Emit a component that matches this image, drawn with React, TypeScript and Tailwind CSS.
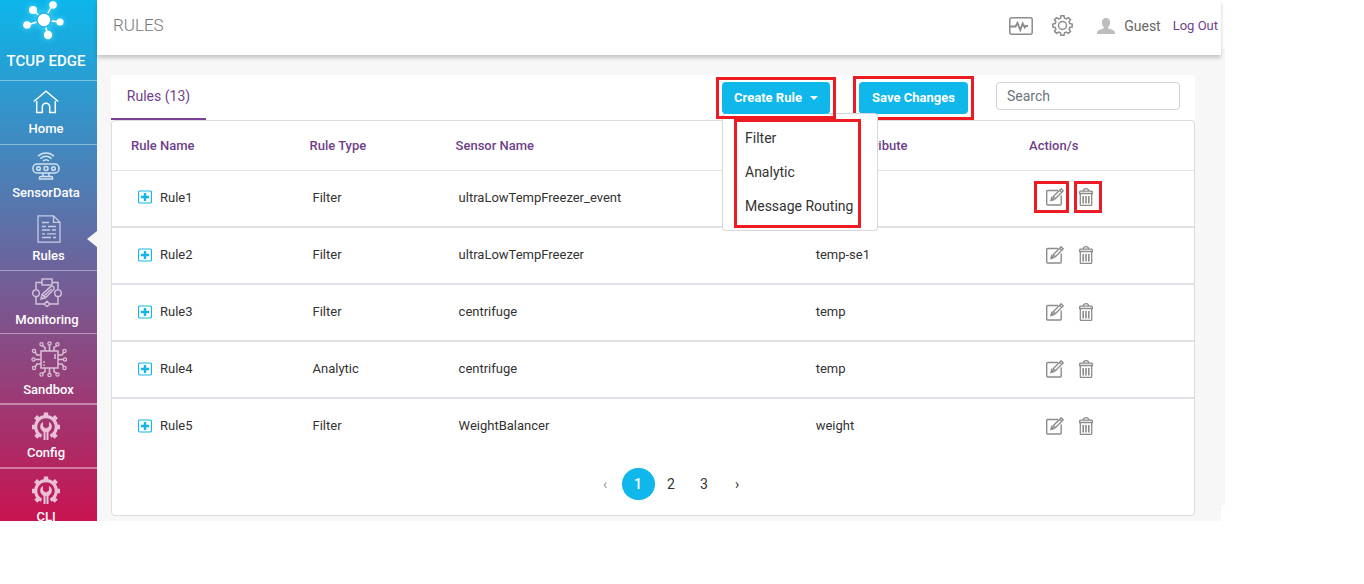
import { clsx } from 'clsx';
import type { ReactNode } from 'react';

interface Rule {
  name: string;
  type: string;
  sensor: string;
  attribute?: string;
}

const rules: Rule[] = [
  { name: 'Rule1', type: 'Filter', sensor: 'ultraLowTempFreezer_event' },
  { name: 'Rule2', type: 'Filter', sensor: 'ultraLowTempFreezer', attribute: 'temp-se1' },
  { name: 'Rule3', type: 'Filter', sensor: 'centrifuge', attribute: 'temp' },
  { name: 'Rule4', type: 'Analytic', sensor: 'centrifuge', attribute: 'temp' },
  { name: 'Rule5', type: 'Filter', sensor: 'WeightBalancer', attribute: 'weight' },
];

function LogoIcon() {
  return (
    <svg
      className="h-[46px] w-14 drop-shadow-[0_0_3px_#4fe3ff]"
      viewBox="0 0 56 46"
      fill="#fff"
      stroke="#fff"
      strokeWidth="1.5"
    >
      <path d="M28 23 17 13M28 23l9-16M28 23l16 2M28 23l4 16M28 23l-17 5" />
      <g stroke="#22b4e4" strokeWidth="1.5">
        <circle cx="28" cy="23" r="7" />
      </g>
      <g stroke="none">
        <circle cx="17" cy="13" r="4" />
        <circle cx="37" cy="8" r="3.8" />
        <circle cx="44" cy="25" r="3.6" />
        <circle cx="32" cy="38" r="4.2" />
        <circle cx="11" cy="28" r="3.8" />
      </g>
    </svg>
  );
}

function HomeIcon() {
  return (
    <svg className="h-6 w-[26px]" viewBox="0 0 26 24" fill="none" stroke="#fff" strokeWidth="1.5">
      <path d="M.8 11.5 13 1.2l12.2 10.3" />
      <path d="M3.7 11v11.5h5.6V17a3.7 3.7 0 0 1 7.4 0v5.5h5.6V11" />
    </svg>
  );
}

function SensorIcon() {
  return (
    <svg className="h-7 w-7" viewBox="0 0 28 28" fill="none" stroke="#d4e2f2" strokeWidth="1.5">
      <path d="M6 4.2C10.500 0 17.500 0 22 4.200M8.500 6.600c3.200-3 7.800-3 11 0M11 9c1.800-1.600 4.200-1.600 6 0" />
      <rect x="1" y="12" width="26" height="9" rx="4" />
      <circle cx="6.500" cy="16.500" r="1.800" />
      <circle cx="14" cy="16.500" r="2" />
      <circle cx="21.500" cy="16.500" r="1.800" />
      <path d="M11 21v3.500M17 21v3.500M7.500 27v-1.200c0-.8.500-1.300 1.300-1.300h10.400c.8 0 1.300.5 1.300 1.300V27z" />
    </svg>
  );
}

function RulesIcon() {
  return (
    <svg className="h-7 w-6" viewBox="0 0 24 28" fill="none" stroke="#c9cbe4" strokeWidth="1.3">
      <path d="M1 .8h15.500L23 7.300v19.900H1z" />
      <path d="M16.500.8v6.500H23" />
      <path d="M5 7.500h7M5 11.500h4M11 11.500h8M5 15h8M15 15h4M5 18.800h3M10 18.800h9M5 22.500h9M16 22.500h3" />
    </svg>
  );
}

function MonitoringIcon() {
  return (
    <svg className="h-[29px] w-[30px]" viewBox="0 0 30 29" fill="none" stroke="#d3c5dc" strokeWidth="1.4">
      <rect x="10" y="1" width="10" height="6" />
      <path d="M10 4.500H4v7M20 4.500h6v7M4 19v7h8M26 19v7h-8" />
      <circle cx="4" cy="15.200" r="3.300" />
      <circle cx="26" cy="15.200" r="3.300" />
      <path d="m15 23.300 2.800 2.700-2.800 2.700-2.800-2.700z" />
      <path d="m9 21 1.200-4.600 8.600-8c1.800-1 4 1 3 3l-8.400 8.400zM10.200 16.400l3.400 3.400M12.500 17.500l7-6.500" />
    </svg>
  );
}

function SandboxIcon() {
  return (
    <svg className="h-9 w-9" viewBox="0 0 36 36" fill="none" stroke="#dcc0d6" strokeWidth="1.5">
      <rect x="10" y="10" width="17" height="17" />
      <path d="M24 13v5M13 23.500V25M13 20v2" />
      <path d="M14 10V6.500l-3-2M18.500 10V4M23 10V6.500l3-2M14 27v3.500l-3 2M18.500 27v6M23 27v3.500l3 2" />
      <path d="M10 14H6l-2-3M10 18.500H4.500M10 23H6l-2 3M27 14h4l2-3M27 18.500h5.500M27 23h4l2 3" />
      <g strokeWidth="1.300">
        <circle cx="10.500" cy="3.200" r="1.600" />
        <circle cx="18.500" cy="2.500" r="1.600" />
        <circle cx="26.500" cy="3.200" r="1.600" />
        <circle cx="10.500" cy="33.500" r="1.600" />
        <circle cx="18.500" cy="34" r="1.600" />
        <circle cx="26.500" cy="33.500" r="1.600" />
        <circle cx="3" cy="10" r="1.600" />
        <circle cx="2.500" cy="18.500" r="1.600" />
        <circle cx="3" cy="27" r="1.600" />
        <circle cx="33.500" cy="10" r="1.600" />
        <circle cx="34" cy="18.500" r="1.600" />
        <circle cx="33.500" cy="27" r="1.600" />
      </g>
    </svg>
  );
}

function ConfigIcon() {
  return (
    <svg className="h-7 w-7" viewBox="0 0 28 28" fill="none" stroke="#e9c0d8">
      <path d="M9.500 24.200A10.300 10.300 0 1 1 18.500 24.200" strokeWidth="3.200" />
      <path
        d="M14 5V.5M6.800 7.800 3.600 4.600M21.200 7.800l3.200-3.200M4.500 15H0M23.500 15H28M6.800 22.200l-3 3M21.200 22.200l3 3"
        strokeWidth="4.400"
      />
      <path
        d="M11 9.800v4.600l3 2 3-2V9.800a5.500 5.500 0 0 1 .2 9.600L16.500 20v8h-5v-8l-.7-.6A5.500 5.500 0 0 1 11 9.800z"
        fill="#e9c0d8"
        stroke="none"
      />
      <path d="M14 20v8" stroke="#a03a78" strokeWidth="1" />
    </svg>
  );
}

function MonitorIcon() {
  return (
    <svg className="h-[18px] w-6" viewBox="0 0 24 18" fill="none" stroke="#8c8c8c" strokeWidth="1.500">
      <rect x=".8" y=".8" width="22.400" height="16.400" rx="2" />
      <path d="M1 9.500h5.500L8.500 6l2.800 7 2.500-6.500 2 4 1.200-1.500h2" strokeWidth="1.900" />
    </svg>
  );
}

function GearIcon() {
  return (
    <svg className="h-[21px] w-[21px]" viewBox="0 0 21 21" fill="none" stroke="#8c8c8c" strokeWidth="1.500">
      <path d="M9 .8h3l.5 2.500 1.700.7 2.200-1.400 2.100 2.100L17.100 6.900l.7 1.600 2.400.5v3l-2.400.5-.7 1.700 1.400 2.100-2.100 2.100-2.200-1.400-1.700.7-.5 2.500H9l-.5-2.500-1.700-.7-2.200 1.400-2.100-2.100 1.400-2.100-.7-1.700-2.400-.5V9l2.400-.5.7-1.600-1.400-2.200 2.100-2.100L6.800 4l1.700-.7z" />
      <circle cx="10.500" cy="10.500" r="4" />
    </svg>
  );
}

function UserIcon() {
  return (
    <svg className="h-4 w-[18px]" viewBox="0 0 18 16" fill="#bdbdbd">
      <path d="M9 0c2.600 0 4.100 1.800 4.100 4.400 0 2-.8 3.700-1.900 4.600v1.200c0 .6 6.800 1.300 6.800 4.600V16H0v-1.200c0-3.300 6.800-4 6.800-4.600V9c-1.100-.9-1.900-2.600-1.900-4.600C4.900 1.800 6.400 0 9 0z" />
    </svg>
  );
}

function ExpandIcon() {
  return (
    <svg className="h-3.5 w-3.5" viewBox="0 0 14 14" fill="none" stroke="#14b5e8">
      <rect x=".5" y="1" width="13" height="12" rx="1.500" strokeWidth="1.200" />
      <path d="M3 7h8M7 3v8" strokeWidth="2.400" />
    </svg>
  );
}

function EditIcon() {
  return (
    <svg className="h-[18px] w-[18px]" viewBox="0 0 18 18" fill="none" stroke="#8c8c8c" strokeWidth="1.400">
      <path d="M12 2.500H1.600c-.5 0-.9.4-.9.900v12.700c0 .5.400.9.900.9h12.700c.5 0 .9-.4.900-.9V7.500" />
      <path d="m7.200 8.700 7.900-7.900 2.100 2.100-7.900 7.900zM13.500 2.300l2.200 2.200M9.300 10.800l-2.100-2.100" />
      <path d="m5 12.500.8-2.800 2 2z" fill="#8c8c8c" />
    </svg>
  );
}

function TrashIcon() {
  return (
    <svg className="h-[18px] w-3.5" viewBox="0 0 14 18" fill="none" stroke="#8c8c8c" strokeWidth="1.300">
      <path d="M.6 5.500V4.200c0-.6.400-1 1-1h10.800c.6 0 1 .4 1 1v1.300zM4 3.200C4.500 1.200 5.500.7 7 .7s2.500.5 3 2.500" />
      <path d="M1.300 5.500v11c0 .5.300.9.800.9h9.800c.5 0 .8-.4.800-.9v-11" />
      <path d="M4.200 8v7.500M7 8v7.500M9.800 8v7.500" strokeWidth="1.600" />
    </svg>
  );
}

interface NavItemProps {
  icon: ReactNode;
  label: string;
  active?: boolean;
  className: string;
}

function NavItem({ icon, label, active, className }: NavItemProps) {
  return (
    <a
      href="#"
      className={clsx(
        'relative flex flex-col items-center gap-[3px] overflow-hidden border-white/40 pt-[7px] text-[13px] font-medium leading-5 text-white',
        className,
      )}
    >
      <span className="flex min-h-7 items-center">{icon}</span>
      {label}
      {active && (
        <span className="absolute right-0 top-[23px] border-y-8 border-r-[10px] border-y-transparent border-r-[#f7f7f7]" />
      )}
    </a>
  );
}

function Sidebar() {
  return (
    <nav className="w-[97px] shrink-0 bg-linear-to-b/srgb from-[#0cb6ea] to-[#c81450]">
      <div className="flex h-[81px] flex-col items-center border-b border-white/40 pr-[5px] text-white">
        <div className="-mt-[3px] pr-1">
          <LogoIcon />
        </div>
        <strong className="mt-2 text-[15px] font-medium leading-5">TCUP EDGE</strong>
      </div>
      <NavItem icon={<HomeIcon />} label="Home" className="h-16 border-b pr-[5px]" />
      <NavItem icon={<SensorIcon />} label="SensorData" className="h-[63px] pr-[5px]" />
      <NavItem icon={<RulesIcon />} label="Rules" active className="h-[63px] border-b" />
      <NavItem icon={<MonitoringIcon />} label="Monitoring" className="h-[63px] border-b pr-[3px]" />
      <NavItem icon={<SandboxIcon />} label="Sandbox" className="h-[71px] border-b-2" />
      <NavItem icon={<ConfigIcon />} label="Config" className="h-16 border-b-2 pr-[5px]" />
      <NavItem icon={<ConfigIcon />} label="CLI" className="h-[52px] pr-[5px]" />
    </nav>
  );
}

function Header() {
  return (
    <header className="relative flex h-[55px] items-center bg-white pb-1 pl-4 pr-[3px] shadow-[0_3px_4px_rgba(0,0,0,0.2)]">
      <h1 className="text-[17px] font-light text-[#777]">RULES</h1>
      <button aria-label="Monitor" className="ml-auto mr-[19px]">
        <MonitorIcon />
      </button>
      <button aria-label="Settings" className="mr-6">
        <GearIcon />
      </button>
      <UserIcon />
      <span className="ml-[9px] mr-3 text-sm text-[#666]">Guest</span>
      <a href="#" className="text-[13px] text-[#6f3f8c]">
        Log Out
      </a>
    </header>
  );
}

// Red outline laid over the control it points at
function Highlight({ className }: { className: string }) {
  return (
    <span className={clsx('pointer-events-none absolute border-3 border-[#ed1c24]', className)} />
  );
}

function CreateRuleMenu() {
  return (
    <div className="relative">
      <button className="relative z-20 flex h-8 w-[108px] items-center justify-center gap-2 rounded-sm bg-[#0fb7ea] text-[13px] font-bold text-white">
        Create Rule
        <span className="border-x-4 border-t-4 border-x-transparent border-t-white" />
      </button>
      <Highlight className="-inset-x-1.5 -inset-y-[5px] z-20" />

      <ul className="absolute left-0 top-[31px] z-10 w-[156px] rounded-sm border border-black/15 bg-white py-[7px] text-sm text-[#333]">
        {['Filter', 'Analytic', 'Message Routing'].map((item) => (
          <li key={item}>
            <button className="h-[34px] w-full whitespace-nowrap pl-[22px] text-left">{item}</button>
          </li>
        ))}
        <li aria-hidden>
          <Highlight className="bottom-0.5 left-[11px] right-4 top-[5px]" />
        </li>
      </ul>
    </div>
  );
}

function Toolbar() {
  return (
    <div className="flex h-[45px] items-start bg-white pr-[15px] pt-[7px]">
      <a
        href="#"
        className="-mt-[7px] flex h-[45px] w-[95px] items-center justify-center border-b-2 border-[#7a4296] pb-0.5 text-sm text-[#6f3f8c]"
      >
        Rules (13)
      </a>
      <div className="ml-auto flex items-start">
        <CreateRuleMenu />
        <div className="relative ml-[29px] mr-7">
          <button className="block h-8 w-[109px] rounded-sm bg-[#0fb7ea] text-[13px] font-bold text-white">
            Save Changes
          </button>
          <Highlight className="-inset-x-1.5 -inset-y-1.5" />
        </div>
        <input
          type="search"
          aria-label="Search"
          placeholder="Search"
          className="h-7 w-[184px] rounded-sm border border-[#ced4da] px-2.5 text-sm placeholder:text-[#6c757d]"
        />
      </div>
    </div>
  );
}

function RulesTable() {
  return (
    <table className="w-full table-fixed text-left text-[13px] text-[#333]">
      <colgroup>
        <col className="w-[16.5%]" />
        <col className="w-[13.5%]" />
        <col className="w-[33%]" />
        <col className="w-[20%]" />
        <col />
      </colgroup>
      <thead>
        <tr className="h-[49px] border-b border-[#dee2e6] text-[#6f3f8c] *:pl-[19px] *:font-medium">
          <th>Rule Name</th>
          <th>Rule Type</th>
          <th>Sensor Name</th>
          <th>Sensor Attribute</th>
          <th>Action/s</th>
        </tr>
      </thead>
      <tbody>
        {rules.map((rule, index) => (
          <tr key={rule.name} className="h-[57px] border-b-2 border-[#dee2e6] *:pb-0.5 last:border-b-0">
            <td className="pl-[26px]">
              <div className="flex items-center gap-2">
                <button aria-label={`Expand ${rule.name}`}>
                  <ExpandIcon />
                </button>
                {rule.name}
              </div>
            </td>
            <td className="pl-[22px]">{rule.type}</td>
            <td className="pl-[22px]">{rule.sensor}</td>
            <td className="pl-[22px]">{rule.attribute}</td>
            <td className="pl-9">
              <div className="flex items-center gap-[15px]">
                <button aria-label={`Edit ${rule.name}`} className="relative">
                  <EditIcon />
                  {index === 0 && <Highlight className="-bottom-[7px] -left-3 -right-[5px] -top-[7px]" />}
                </button>
                <button aria-label={`Delete ${rule.name}`} className="relative">
                  <TrashIcon />
                  {index === 0 && <Highlight className="-bottom-[7px] -left-[5px] -right-[9px] -top-[7px]" />}
                </button>
              </div>
            </td>
          </tr>
        ))}
      </tbody>
    </table>
  );
}

function Pagination() {
  return (
    <div className="mb-[15px] mt-[13px] flex justify-center pl-9 text-sm text-[#333] *:h-8 *:w-[33px]">
      <button aria-label="Previous" className="text-[#999]">
        ‹
      </button>
      <button className="rounded-full bg-[#0fb7ea] font-medium text-white">1</button>
      <button>2</button>
      <button>3</button>
      <button aria-label="Next">›</button>
    </div>
  );
}

export default function App() {
  return (
    <div className="flex bg-white pr-[139px] font-['Roboto',sans-serif]">
      <Sidebar />
      <div className="min-w-0 flex-1 bg-[#f7f7f7]">
        <Header />
        <main className="pb-[5px] pl-3.5 pr-[26px] pt-5">
          <Toolbar />
          <section className="rounded-sm border border-[#dcdcdc] bg-white">
            <RulesTable />
            <Pagination />
          </section>
        </main>
      </div>
      <div className="mb-4 mt-[49px] w-1 bg-[#f7f7f7]" />
    </div>
  );
}
